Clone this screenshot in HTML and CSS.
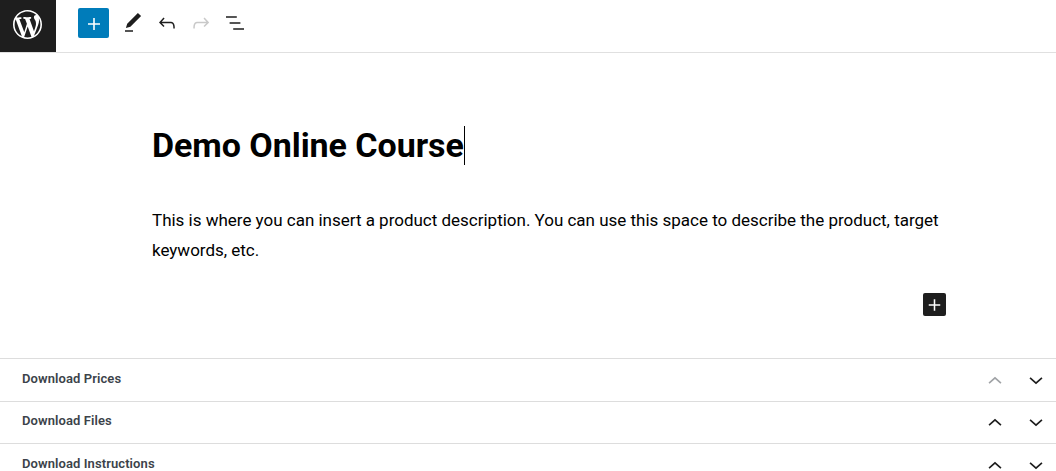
FILE: index.html
```html
<!DOCTYPE html>
<html lang="en">
<head>
  <meta charset="UTF-8" />
  <meta name="viewport" content="width=device-width, initial-scale=1.0"/>
  <title>Demo Online Course</title>

  <link rel="stylesheet" href="styles.css">
</head>
<body>

  <!-- Top toolbar -->
  <header class="toolbar">
    <a class="wp-logo" href="#">
      <svg width="29" height="29" viewBox="0 0 20 20" fill="#fff"><path d="M20 10c0-5.51-4.49-10-10-10C4.48 0 0 4.49 0 10c0 5.52 4.48 10 10 10 5.51 0 10-4.48 10-10zM7.78 15.37L4.37 6.22c.55-.02 1.17-.08 1.17-.08.5-.06.44-1.13-.06-1.11 0 0-1.45.11-2.37.11-.18 0-.37 0-.58-.01C4.12 2.69 6.87 1.11 10 1.11c2.33 0 4.45.87 6.05 2.34-.68-.11-1.65.39-1.65 1.58 0 .74.45 1.36.9 2.1.35.61.55 1.36.55 2.46 0 1.49-1.4 5-1.4 5l-3.03-8.37c.54-.02.82-.17.82-.17.5-.05.44-1.25-.06-1.22 0 0-1.44.12-2.38.12-.87 0-2.33-.12-2.33-.12-.5-.03-.56 1.2-.06 1.22l.92.08 1.26 3.41zM17.41 10c.24-.64.74-1.87.43-4.25.7 1.29 1.05 2.71 1.05 4.25 0 3.29-1.73 6.24-4.4 7.78.97-2.59 1.94-5.2 2.92-7.78zM6.1 18.09C3.12 16.65 1.11 13.53 1.11 10c0-1.3.23-2.48.72-3.59C3.25 10.3 4.67 14.2 6.1 18.09zm4.03-6.63l2.58 6.98c-.86.29-1.76.45-2.71.45-.79 0-1.57-.11-2.29-.33.81-2.38 1.62-4.74 2.42-7.1z"/></svg>
    </a>
    <div class="tools">
      <button class="add-block">
        <svg width="24" height="24" viewBox="0 0 24 24" fill="#fff"><path d="M18 11.2h-5.2V6h-1.6v5.2H6v1.6h5.2V18h1.6v-5.2H18z"/></svg>
      </button>
      <button class="tool">
        <svg width="24" height="24" viewBox="0 0 24 24"><path d="M20.1 5.1L16.9 2 6.2 12.7l-1.3 4.4 4.5-1.3L20.1 5.1zM4 20.8h8v-1.5H4v1.5z"/></svg>
      </button>
      <button class="tool">
        <svg width="24" height="24" viewBox="0 0 24 24"><path d="M18.3 11.7c-.6-.6-1.4-.9-2.3-.9H6.7l2.9-3.3-1.1-1-4.5 5L8.5 16l1-1-2.7-2.7H16c.5 0 .9.2 1.3.5 1 1 1 3.4 1 4.5v.3h1.5v-.2c0-1.5 0-4.3-1.5-5.7z"/></svg>
      </button>
      <button class="tool is-disabled">
        <svg width="24" height="24" viewBox="0 0 24 24"><path d="M15.6 6.5l-1.1 1 2.9 3.3H8c-.9 0-1.7.3-2.3.9-1.4 1.5-1.4 4.2-1.4 5.6v.2h1.5v-.3c0-1.1 0-3.5 1-4.5.3-.3.7-.5 1.3-.5h9.2L14.5 15l1.1 1.1 4.6-4.6-4.6-5z"/></svg>
      </button>
      <button class="tool">
        <svg width="24" height="24" viewBox="0 0 24 24"><path d="M13.8 5.2H3v1.5h10.8V5.2zm-3.6 12v1.5H21v-1.5H10.2zm7.2-6H6.6v1.5h10.8v-1.5z"/></svg>
      </button>
    </div>
  </header>

  <!-- Editor canvas -->
  <main class="canvas">
    <h1 class="post-title">Demo Online Course<span class="caret"></span></h1>
    <p class="post-text">This is where you can insert a product description. You can use this space to describe the product, target keywords, etc.</p>
    <div class="inserter-row">
      <button class="inserter">
        <svg width="24" height="24" viewBox="0 0 24 24" fill="#fff"><path d="M18 11.2h-5.2V6h-1.6v5.2H6v1.6h5.2V18h1.6v-5.2H18z"/></svg>
      </button>
    </div>
  </main>

  <!-- Meta boxes -->
  <section class="panels">
    <div class="panel">
      <h2>Download Prices</h2>
      <button class="arrow is-disabled"><svg width="24" height="24" viewBox="0 0 24 24"><path d="M5.5 14.4 12 8.8l6.5 5.6-1.1 1.3L12 11.1l-5.4 4.6z"/></svg></button>
      <button class="arrow"><svg width="24" height="24" viewBox="0 0 24 24"><path d="M18.5 10.6 12 16.2l-6.5-5.6 1.1-1.3 5.4 4.6 5.4-4.6z"/></svg></button>
    </div>
    <div class="panel">
      <h2>Download Files</h2>
      <button class="arrow"><svg width="24" height="24" viewBox="0 0 24 24"><path d="M5.5 14.4 12 8.8l6.5 5.6-1.1 1.3L12 11.1l-5.4 4.6z"/></svg></button>
      <button class="arrow"><svg width="24" height="24" viewBox="0 0 24 24"><path d="M18.5 10.6 12 16.2l-6.5-5.6 1.1-1.3 5.4 4.6 5.4-4.6z"/></svg></button>
    </div>
    <div class="panel">
      <h2>Download Instructions</h2>
      <button class="arrow"><svg width="24" height="24" viewBox="0 0 24 24"><path d="M5.5 14.4 12 8.8l6.5 5.6-1.1 1.3L12 11.1l-5.4 4.6z"/></svg></button>
      <button class="arrow"><svg width="24" height="24" viewBox="0 0 24 24"><path d="M18.5 10.6 12 16.2l-6.5-5.6 1.1-1.3 5.4 4.6 5.4-4.6z"/></svg></button>
    </div>
  </section>

</body>
</html>
```

FILE: styles.css
```css
html, body {
  height: 100%;
  overflow: hidden;
}
body {
  margin: 0;
  font-family: Roboto, "Liberation Sans", sans-serif;
  color: #000;
  background-color: #fff;
}
button {
  display: flex;
  align-items: center;
  justify-content: center;
  padding: 0;
  border: none;
  background: none;
  cursor: pointer;
}
svg {
  display: block;
}
.toolbar {
  display: flex;
  height: 52px;
  border-bottom: 1px solid #e0e0e0;
}
.wp-logo {
  display: flex;
  align-items: center;
  justify-content: center;
  box-sizing: border-box;
  width: 56px;
  height: 52px;
  padding: 0 2px 4px 0;
  background-color: #1e1e1e;
}
.tools {
  display: flex;
  align-items: center;
  margin-left: 22px;
  padding-bottom: 6px;
}
.add-block {
  width: 31px;
  height: 30px;
  margin-right: 7px;
  padding-top: 2px;
  background-color: #007cba;
  border-radius: 2px;
}
.tool {
  width: 34px;
  height: 34px;
  fill: #1e1e1e;
}
.tool.is-disabled {
  fill: #c9c9c9;
}
.canvas {
  padding: 0 110px 0 152px;
}
.post-title {
  display: flex;
  align-items: center;
  height: 39px;
  margin: 73px 0 0;
  font-size: 34px;
  font-weight: 700;
  line-height: 39px;
  letter-spacing: -0.05px;
}
.caret {
  width: 1px;
  height: 39px;
  background-color: #000;
}
.post-text {
  margin: 40px 0 0;
  font-size: 17px;
  line-height: 30px;
  letter-spacing: -0.01px;
}
.inserter-row {
  display: flex;
  justify-content: flex-end;
  margin-top: 28px;
}
.inserter {
  width: 23px;
  height: 23px;
  background-color: #1e1e1e;
  border-radius: 2px;
}
.panels {
  margin-top: 42px;
  border-top: 1px solid #ddd;
}
.panel {
  display: flex;
  align-items: center;
  height: 41.5px;
  padding-left: 22px;
  border-bottom: 1px solid #ddd;
}
.panel h2 {
  flex: 1;
  margin: 0 0 3px;
  font-size: 13px;
  font-weight: 600;
  letter-spacing: 0.09px;
  color: #3c434a;
}
.arrow {
  width: 41px;
  height: 41px;
  fill: #1e1e1e;
}
.arrow.is-disabled {
  fill: #a0a3a6;
}
```
